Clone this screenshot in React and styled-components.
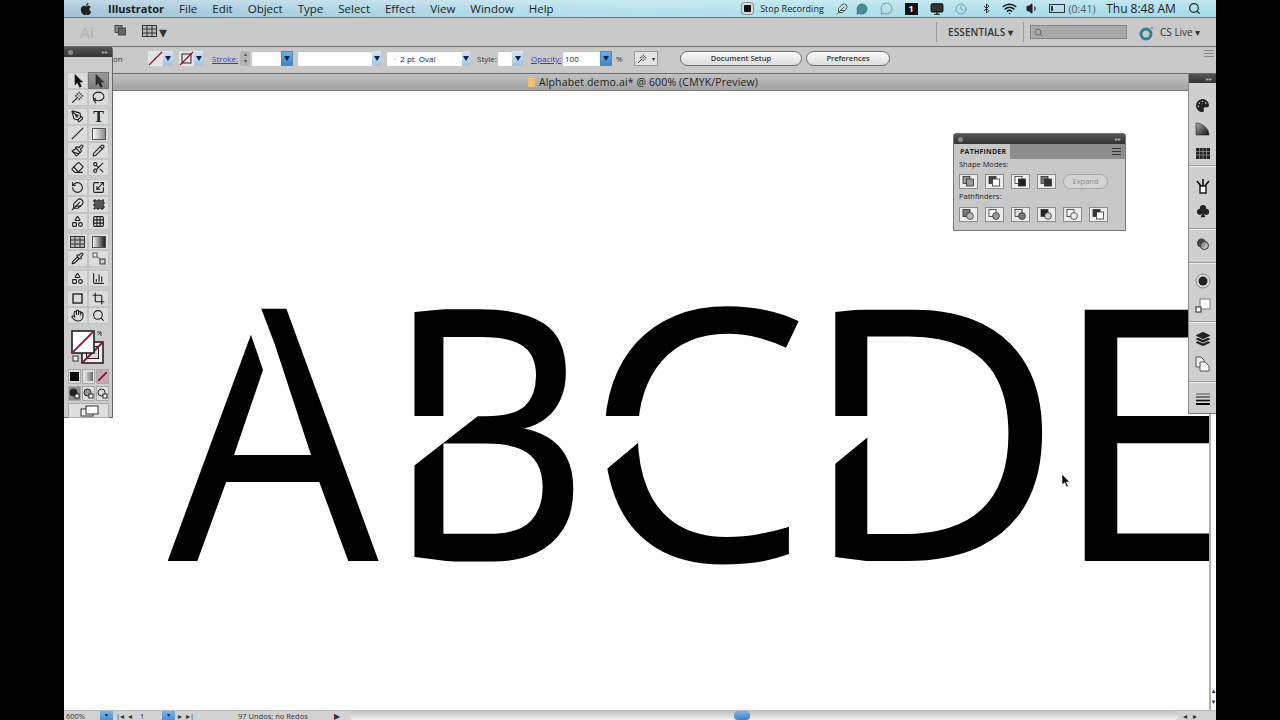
import styled, { createGlobalStyle } from "styled-components";
import {
  Bluetooth, ChartColumn, Clock, Crop, Eraser, Feather, Grid3x3, Hand, Lasso, MessageCircle, Monitor,
  Paintbrush, PenTool, Pencil, Pipette, RotateCcw, Scaling, Scissors, Search, Shapes, Slash, Volume1, Wand, Wifi,
} from "lucide-react";
import { FaApple, FaLayerGroup, FaPalette } from "react-icons/fa";
import { BsSuitClubFill } from "react-icons/bs";

const UI_FONT = `"Open Sans", "Liberation Sans", sans-serif`;

const GlobalStyle = createGlobalStyle`
  html, body { margin: 0; height: 100%; background: #000; overflow: hidden; }
  #root { height: 100%; }
  * { box-sizing: border-box; }
`;

const Screen = styled.div`
  position: relative;
  width: 1152px;
  height: 720px;
  margin-left: 64px;
  display: flex;
  flex-direction: column;
  overflow: hidden;
  font-family: ${UI_FONT};
  color: #1c1c1c;
`;

/* ---- mac menu bar ---- */
const MenuBar = styled.div`
  height: 18px;
  flex: none;
  display: flex;
  align-items: center;
  padding-left: 15px;
  font-size: 11.5px;
  border-bottom: 1px solid #68757c;
  background:
    linear-gradient(180deg, rgba(255, 255, 255, 0.3), rgba(255, 255, 255, 0) 70%),
    linear-gradient(90deg, #a6c6da, #b4e2ec 50%, #a7dde9);
`;
const AppleSlot = styled.span`
  display: flex;
  width: 29px;
  font-size: 14px;
  color: #222;
`;
const MenuItem = styled.span`
  margin-right: 15px;
  font-size: ${(p) => (p.$bold ? 11 : 11.5)}px;
  font-weight: ${(p) => (p.$bold ? 700 : 400)};
  white-space: nowrap;
`;
const Extras = styled.div`
  position: absolute;
  left: 676px;
  top: 0;
  height: 17px;
  display: flex;
  align-items: center;
`;
const ExtraSlot = styled.span`
  width: ${(p) => p.$w ?? 24}px;
  margin-left: ${(p) => p.$ml ?? 0}px;
  display: flex;
  justify-content: center;
  align-items: center;
  flex: none;
  font-size: ${(p) => p.$fs ?? 9}px;
  white-space: nowrap;
  color: ${(p) => p.$color ?? "#1c1c1c"};
`;
const StopDot = styled.span`
  width: 11px;
  height: 11px;
  border-radius: 3px;
  border: 2px solid #d9dde2;
  background: #111;
  box-shadow: 0 0 0 1px #8a8f96;
`;
const Battery = styled.span`
  width: 16px;
  height: 9px;
  border: 1px solid #333;
  position: relative;
  &::before {
    content: "";
    position: absolute;
    left: 1px;
    top: 1px;
    bottom: 1px;
    width: 2px;
    background: #333;
  }
`;
const IconTile = styled.span`
  width: 13px;
  height: 12px;
  background: #111;
  color: #eee;
  font-size: 9px;
  font-weight: 700;
  line-height: 12px;
  text-align: center;
`;

/* ---- application bar ---- */
const AppBar = styled.div`
  height: 29px;
  flex: none;
  position: relative;
  display: flex;
  align-items: center;
  background: #c9c9c9;
  border-bottom: 1px solid #6f6f6f;
`;
const AiMark = styled.span`
  margin-left: 16px;
  width: 18px;
  font-size: 15px;
  font-weight: 600;
  color: #b5b5b5;
`;
const Divider = styled.span`
  width: 1px;
  height: 20px;
  background: #9a9a9a;
  margin-left: ${(p) => p.$ml}px;
  flex: none;
`;
const Essentials = styled.span`
  margin-left: 11px;
  width: 75px;
  font-size: 10px;
  font-weight: 600;
  letter-spacing: 0.1px;
  color: #333;
`;
const SearchBox = styled.span`
  margin-left: 6px;
  width: 97px;
  height: 14px;
  background: #a9a9a9;
  border: 1px solid #858585;
  display: flex;
  align-items: center;
  padding-left: 3px;
  color: #555;
`;
const CsLive = styled.span`
  margin-left: 5px;
  font-size: 10px;
  color: #333;
  white-space: nowrap;
`;

/* ---- control bar ---- */
const ControlBar = styled.div`
  height: 27px;
  flex: none;
  display: flex;
  align-items: center;
  padding: 0 0 3px 49px;
  background: #c9c9c9;
  border-bottom: 1px solid #6a6a6a;
  font-size: 8px;
`;
const Caption = styled.span`
  width: ${(p) => p.$w}px;
  margin-left: ${(p) => p.$ml ?? 0}px;
  flex: none;
  white-space: nowrap;
  color: #333;
`;
const LinkCaption = styled(Caption)`
  color: #3a3ac0;
  text-decoration: underline;
`;
const Combo = styled.span`
  margin-left: ${(p) => p.$ml ?? 0}px;
  display: flex;
  flex: none;
  height: 15px;
`;
const Field = styled.span`
  width: ${(p) => p.$w}px;
  background: #fff;
  display: flex;
  align-items: center;
  padding-left: ${(p) => p.$pl ?? 2}px;
  font-size: 8px;
  white-space: nowrap;
  box-shadow: inset 0 1px 1px #bbb;
`;
const Drop = styled.span`
  width: ${(p) => p.$w ?? 10}px;
  background: ${(p) => (p.$strong ? "linear-gradient(#6fb0e6, #3d85c9)" : "linear-gradient(#d5e6f4, #9cc4e4)")};
  border: ${(p) => (p.$strong ? "1px solid #4d8cb4" : "none")};
  display: flex;
  align-items: center;
  justify-content: center;
  &::after {
    content: "";
    border-left: 3px solid transparent;
    border-right: 3px solid transparent;
    border-top: 5px solid #10204a;
  }
`;
const Spin = styled.span`
  width: 10px;
  height: 15px;
  margin-left: 1px;
  flex: none;
  background: #b4b4b4;
  border-radius: 2px;
  color: #555;
  font-size: 6px;
  line-height: 7px;
  text-align: center;
`;
const Pill = styled.span`
  width: ${(p) => p.$w}px;
  margin-left: ${(p) => p.$ml}px;
  flex: none;
  height: 15px;
  border: 1px solid #6b6b6b;
  border-radius: 8px;
  background: linear-gradient(#fafafa, #dcdcdc);
  font-size: 7.5px;
  font-weight: 600;
  line-height: 13px;
  text-align: center;
  color: #333;
`;
const FlashBox = styled.span`
  width: 24px;
  height: 15px;
  margin-left: 12px;
  flex: none;
  border: 1px solid #999;
  background: #e4e4e4;
  display: flex;
  align-items: center;
  justify-content: space-between;
  padding: 0 2px;
  font-size: 6px;
`;
const PanelMenu = styled.span`
  margin: 0 2px 10px auto;
  width: 10px;
  height: 7px;
  background: repeating-linear-gradient(#8a8a8a 0 1px, transparent 1px 3px);
`;

/* ---- document title ---- */
const DocTab = styled.div`
  height: 17px;
  flex: none;
  display: flex;
  align-items: center;
  justify-content: center;
  gap: 4px;
  padding-left: 6px;
  font-size: 10.5px;
  letter-spacing: 0.15px;
  background: linear-gradient(#c2c2c2, #a2a2a2);
  border-bottom: 1px solid #7d7d7d;
`;
const DocIcon = styled.span`
  width: 7px;
  height: 9px;
  background: #f0c27a;
`;

/* ---- canvas ---- */
const Work = styled.div`
  flex: 1;
  min-height: 0;
  display: flex;
`;
const Canvas = styled.div`
  position: relative;
  flex: 1;
  background: #fff;
  overflow: hidden;
`;
const Letter = styled.span`
  position: absolute;
  left: ${(p) => p.$x}px;
  top: 159px;
  font-family: "Open Sans", sans-serif;
  font-size: 349px;
  line-height: 1;
  color: #000;
  -webkit-text-stroke: ${(p) => p.$stroke ?? 2}px #000;
  transform: scaleX(${(p) => p.$sx ?? 1});
  transform-origin: left top;
`;
const CutOverlay = styled.svg`
  position: absolute;
  left: 0;
  top: 0;
`;
const Pointer = styled.svg`
  position: absolute;
  left: 997px;
  top: 382px;
`;
const VScroll = styled.div`
  width: 7px;
  flex: none;
  background: #fff;
  border-left: 2px solid #b0b0b0;
  display: flex;
  flex-direction: column;
  justify-content: flex-end;
  align-items: center;
  font-size: 6px;
  line-height: 11px;
  color: #333;
  padding-bottom: 2px;
`;

/* ---- status bar ---- */
const StatusBar = styled.div`
  height: 10px;
  flex: none;
  display: flex;
  align-items: center;
  background: #d2d2d2;
  border-top: 1px solid #bbb;
  font-size: 7.5px;
  color: #333;
`;
const StatusText = styled.span`
  width: ${(p) => p.$w}px;
  margin-left: ${(p) => p.$ml ?? 0}px;
  flex: none;
  white-space: nowrap;
`;
const StatusDrop = styled.span`
  width: 13px;
  height: 9px;
  flex: none;
  background: linear-gradient(#78b4e6, #4d8fd0);
  color: #10204a;
  font-size: 6px;
  line-height: 9px;
  text-align: center;
`;
const HTrack = styled.span`
  position: relative;
  width: 828px;
  height: 9px;
  margin-left: 8px;
  flex: none;
  background: linear-gradient(#c0c0c0, #f2f2f2);
  border-radius: 4px;
`;
const HThumb = styled.span`
  position: absolute;
  left: 384px;
  top: 0;
  width: 16px;
  height: 9px;
  border-radius: 4px;
  background: linear-gradient(#7ab4e8, #3f7fc4);
`;

/* ---- floating panels ---- */
const PanelHead = styled.div`
  height: ${(p) => p.$h}px;
  flex: none;
  background: linear-gradient(#555, #333);
  display: flex;
  align-items: center;
  justify-content: space-between;
  padding: 0 4px;
  color: #aaa;
  font-size: 6px;
  line-height: 1;
  &::before {
    content: "";
    width: 5px;
    height: 5px;
    border-radius: 50%;
    background: ${(p) => (p.$noDot ? "transparent" : "#888")};
  }
`;
const ToolPanel = styled.div`
  position: absolute;
  left: 0;
  top: 47px;
  width: 49px;
  height: 371px;
  z-index: 3;
  background: #cbcbcb;
  border-right: 1px solid #666;
  border-bottom: 1px solid #666;
  border-radius: 3px 3px 0 0;
  display: flex;
  flex-direction: column;
  padding-bottom: 2px;
`;
const ToolGrip = styled.div`
  height: 15px;
  flex: none;
`;
const ToolGroup = styled.div`
  display: grid;
  grid-template-columns: 21px 21px;
  grid-auto-rows: 17px;
  justify-content: center;
  margin-bottom: ${(p) => p.$mb ?? 3}px;
`;
const ToolCell = styled.span`
  display: flex;
  align-items: center;
  justify-content: center;
  position: relative;
  background: ${(p) => (p.$active ? "linear-gradient(#9a9a9a, #7e7e7e)" : "#dcdcdc")};
  border: 1px solid ${(p) => (p.$active ? "#777" : "#c4c4c4")};
  color: #1e1e1e;
`;
const SwatchArea = styled.div`
  height: 42px;
  flex: none;
  padding: 2px 0 0 6px;
`;
const ModeRow = styled.div`
  display: flex;
  justify-content: center;
  gap: 1px;
  height: 15px;
  margin-bottom: 2px;
  flex: none;
`;
const ModeCell = styled.span`
  width: ${(p) => p.$w ?? 13}px;
  height: 15px;
  display: flex;
  align-items: center;
  justify-content: center;
  background: ${(p) => p.$bg ?? "#dedede"};
  border: 1px solid #aaa;
`;
const ModeChip = styled.span`
  width: 9px;
  height: 9px;
  background: ${(p) => p.$fill};
`;

const PathPanel = styled.div`
  position: absolute;
  left: 889px;
  top: 133px;
  width: 173px;
  height: 98px;
  z-index: 3;
  background: #c8c8c8;
  border: 1px solid #777;
  border-radius: 3px 3px 0 0;
  display: flex;
  flex-direction: column;
  font-size: 7.5px;
`;
const TabRow = styled.div`
  height: 15px;
  flex: none;
  display: flex;
  background: #8e8e8e;
`;
const PathTab = styled.span`
  width: 56px;
  background: #c8c8c8;
  font-size: 7px;
  font-weight: 700;
  letter-spacing: 0.2px;
  line-height: 15px;
  padding-left: 6px;
`;
const TabMenu = styled.span`
  margin: 4px 4px 0 auto;
  width: 9px;
  height: 7px;
  background: repeating-linear-gradient(#333 0 1px, transparent 1px 3px);
`;
const PathBody = styled.div`
  padding: 0 5px;
  display: flex;
  flex-direction: column;
`;
const PathLabel = styled.div`
  height: 11px;
  line-height: 11px;
  margin-bottom: ${(p) => p.$mb ?? 4}px;
  color: #222;
`;
const PathRow = styled.div`
  display: flex;
  gap: 7px;
  height: 15px;
  margin-bottom: 2px;
`;
const PathBtn = styled.span`
  width: 19px;
  height: 15px;
  background: #ececec;
  border: 1px solid #8b8b8b;
  flex: none;
  display: flex;
  align-items: center;
  justify-content: center;
`;
const ExpandBtn = styled.span`
  width: 45px;
  height: 15px;
  border: 1px solid #a5a5a5;
  border-radius: 8px;
  font-size: 7.5px;
  line-height: 13px;
  text-align: center;
  color: #8f8f8f;
  background: #d4d4d4;
`;

const Dock = styled.div`
  position: absolute;
  left: 1124px;
  top: 74px;
  width: 28px;
  height: 340px;
  z-index: 3;
  background: #cfcfcf;
  border-left: 1px solid #888;
  border-bottom: 1px solid #777;
  display: flex;
  flex-direction: column;
`;
const DockGroup = styled.div`
  height: ${(p) => p.$h}px;
  flex: none;
  padding-top: ${(p) => p.$pt}px;
  border-bottom: 1px solid #9c9c9c;
  box-shadow: 0 1px 0 #eee;
  display: flex;
  flex-direction: column;
  align-items: center;
  &:last-child { border-bottom: 0; box-shadow: none; }
`;
const DockCell = styled.span`
  height: ${(p) => p.$h ?? 24}px;
  flex: none;
  display: flex;
  align-items: center;
  color: #222;
  font-size: 14px;
`;

/* ---- small drawings ---- */
const ArrowIcon = ({ fill = "#111" }) => (
  <svg width="14" height="14" viewBox="0 0 14 14">
    <path d="M4 0.5V11L6.5 8.6 8.6 13.2 10.4 12.4 8.3 8H11.5Z" fill={fill} stroke="#111" strokeWidth="0.6" />
  </svg>
);

const lucide = (Icon) => <Icon size={13} strokeWidth={2} />;

const GradientSquare = ({ dark }) => (
  <svg width="14" height="12" viewBox="0 0 14 12">
    <defs>
      <linearGradient id={dark ? "g-d" : "g-l"}>
        <stop offset="0" stopColor="#fff" />
        <stop offset="1" stopColor={dark ? "#111" : "#888"} />
      </linearGradient>
    </defs>
    <rect x="0.5" y="0.5" width="13" height="11" fill={`url(#${dark ? "g-d" : "g-l"})`} stroke="#555" />
  </svg>
);

const ToolT = styled.span`
  font-family: "Liberation Serif", serif;
  font-size: 16px;
  font-weight: 700;
  line-height: 1;
`;

const FreeTransform = () => (
  <svg width="14" height="13" viewBox="0 0 14 13">
    <rect x="2" y="2" width="10" height="9" fill="#555" stroke="#111" strokeDasharray="2 2" />
  </svg>
);

const MeshSquare = () => (
  <svg width="15" height="12" viewBox="0 0 15 12">
    <rect x="0.5" y="0.5" width="14" height="11" fill="#bbb" stroke="#333" />
    <path d="M5 0V12M10 0V12M0 4H15M0 8H15" stroke="#333" />
  </svg>
);

const BlendDots = () => (
  <svg width="14" height="13" viewBox="0 0 14 13">
    <rect x="1" y="1" width="4" height="4" fill="#eee" stroke="#555" />
    <rect x="8" y="7" width="5" height="5" fill="#ccc" stroke="#333" />
    <path d="M5 5L8 7" stroke="#555" />
  </svg>
);

const ArtboardIcon = () => (
  <svg width="13" height="13" viewBox="0 0 13 13">
    <rect x="2" y="2" width="9" height="9" fill="none" stroke="#222" strokeWidth="1.4" />
  </svg>
);

const toolGroups = [
  [<ArrowIcon />, <ArrowIcon fill="#333" />, lucide(Wand), lucide(Lasso)],
  [lucide(PenTool), <ToolT>T</ToolT>, lucide(Slash), <GradientSquare />, lucide(Paintbrush), lucide(Pencil), lucide(Eraser), lucide(Scissors)],
  [lucide(RotateCcw), lucide(Scaling), lucide(Feather), <FreeTransform />, lucide(Shapes), lucide(Grid3x3)],
  [<MeshSquare />, <GradientSquare dark />, lucide(Pipette), <BlendDots />],
  [lucide(Shapes), lucide(ChartColumn)],
  [<ArtboardIcon />, lucide(Crop), lucide(Hand), lucide(Search)],
];

const Swatches = () => (
  <svg width="36" height="38" viewBox="0 0 36 38">
    <rect x="12" y="13" width="21" height="21" fill="#fbe9ef" stroke="#222" strokeWidth="1.6" />
    <rect x="16.5" y="17.5" width="12" height="12" fill="#d9d9d9" stroke="#222" />
    <path d="M12 34L33 13" stroke="#7c1838" strokeWidth="1.8" />
    <rect x="2" y="2" width="22" height="22" fill="#fff" stroke="#222" strokeWidth="1.6" />
    <path d="M2 24L24 2" stroke="#9c1c40" strokeWidth="1.8" />
    <path d="M27 3h4v4M31 3l-3 3" fill="none" stroke="#444" />
    <rect x="3" y="27" width="5" height="5" fill="#eee" stroke="#333" />
  </svg>
);

const DrawMode = ({ shade }) => (
  <svg width="11" height="11" viewBox="0 0 11 11">
    <circle cx="4.5" cy="4.5" r="3.5" fill={shade} stroke="#222" />
    <rect x="6" y="6" width="4" height="4" fill="#fff" stroke="#222" />
  </svg>
);

const ScreenMode = () => (
  <svg width="26" height="12" viewBox="0 0 26 12">
    <rect x="6" y="4" width="12" height="7" fill="#eee" stroke="#333" />
    <rect x="11" y="1" width="12" height="8" fill="#fff" stroke="#333" />
  </svg>
);

const StrokeMini = () => (
  <svg width="9" height="9" viewBox="0 0 9 9">
    <path d="M0 9L9 0" stroke="#7c1030" strokeWidth="1.6" />
  </svg>
);

// overlapping squares for the pathfinder buttons, the variant says what is dark
const PathGlyph = ({ back = "#fff", front = "#888", round }) => (
  <svg width="13" height="11" viewBox="0 0 13 11">
    <rect x="1" y="0.5" width="7" height="7" fill={back} stroke="#333" strokeWidth="0.8" />
    {round ? (
      <circle cx="8" cy="7" r="3.4" fill={front} stroke="#333" strokeWidth="0.8" />
    ) : (
      <rect x="4.5" y="3" width="7" height="7" fill={front} stroke="#333" strokeWidth="0.8" />
    )}
  </svg>
);

const GradientWedge = () => (
  <svg width="15" height="14" viewBox="0 0 15 14">
    <defs>
      <linearGradient id="wedge" x1="0" y1="0" x2="1" y2="1">
        <stop offset="0" stopColor="#aaa" />
        <stop offset="1" stopColor="#111" />
      </linearGradient>
    </defs>
    <path d="M1 1C8 1 14 7 14 13H1Z" fill="url(#wedge)" stroke="#222" strokeWidth="0.6" />
  </svg>
);

const SwatchGrid = () => (
  <svg width="14" height="11" viewBox="0 0 14 11">
    <rect width="14" height="11" fill="#222" />
    <path d="M3.5 0V11M7 0V11M10.5 0V11M0 3.5H14M0 7H14" stroke="#999" strokeWidth="0.7" />
  </svg>
);

const BrushPot = () => (
  <svg width="14" height="16" viewBox="0 0 14 16">
    <rect x="4" y="8" width="6" height="7" fill="#fff" stroke="#111" strokeWidth="1.4" />
    <path d="M7 8V1M5 8L1 3M9 8L13 3" stroke="#111" strokeWidth="1.6" />
  </svg>
);

const AppearanceDial = () => (
  <svg width="14" height="14" viewBox="0 0 14 14">
    <circle cx="5.5" cy="6" r="4.5" fill="#444" />
    <circle cx="8.5" cy="8.5" r="4" fill="#bbb" fillOpacity="0.7" stroke="#333" />
  </svg>
);

const StrokeDisc = () => (
  <svg width="16" height="16" viewBox="0 0 16 16">
    <circle cx="8" cy="8" r="7" fill="#ddd" stroke="#888" />
    <circle cx="8" cy="8" r="4.5" fill="#222" />
  </svg>
);

const TwoSquares = () => (
  <svg width="16" height="15" viewBox="0 0 16 15">
    <rect x="5" y="1" width="10" height="10" fill="#fff" stroke="#777" />
    <rect x="1" y="9" width="5" height="5" fill="#fff" stroke="#222" />
  </svg>
);

const Pages = () => (
  <svg width="15" height="16" viewBox="0 0 15 16">
    <path d="M1 1H6L9 4V11H1Z" fill="#eee" stroke="#555" />
    <path d="M5 6H10L14 10V15H5Z" fill="#fff" stroke="#555" />
  </svg>
);

const HeavyLines = () => (
  <svg width="14" height="12" viewBox="0 0 14 12">
    <path d="M0 1H14" stroke="#555" />
    <path d="M0 4H14" stroke="#333" strokeWidth="1.2" />
    <path d="M0 7.5H14" stroke="#111" strokeWidth="1.6" />
    <path d="M0 11H14" stroke="#000" strokeWidth="2" />
  </svg>
);

const StrokeChip = ({ crossed }) => (
  <svg width="15" height="15" viewBox="0 0 15 15">
    <rect width="15" height="15" fill="#e4e4e4" />
    {crossed && <rect x="3" y="3" width="9" height="9" fill="none" stroke="#222" />}
    <path d="M1 14L14 1" stroke="#8a1030" strokeWidth="1.2" />
  </svg>
);

const CsLiveRing = () => (
  <svg width="16" height="16" viewBox="0 0 16 16">
    <circle cx="7" cy="9" r="5" fill="none" stroke="#2d7f95" strokeWidth="3" />
    <circle cx="13" cy="3" r="1.3" fill="#7a9aa5" />
  </svg>
);

const menus = ["File", "Edit", "Object", "Type", "Select", "Effect", "View", "Window", "Help"];

const extras = [
  { w: 14, node: <StopDot /> },
  { w: 68, ml: 4, node: "Stop Recording" },
  { ml: 4, node: <Feather size={12} color="#555" /> },
  { ml: -4, node: <MessageCircle size={12} color="#3b7a6a" fill="#4a8b9a" /> },
  { node: <MessageCircle size={13} color="#8aa0a8" /> },
  { ml: 1, node: <IconTile>1</IconTile> },
  { ml: 2, node: <Monitor size={14} color="#111" fill="#333" /> },
  { node: <Clock size={12} color="#7f99a8" /> },
  { ml: 1, node: <Bluetooth size={11} color="#222" /> },
  { ml: -1, node: <Wifi size={15} color="#111" strokeWidth={2.4} /> },
  { ml: -1, node: <Volume1 size={13} color="#222" fill="#222" /> },
  { ml: 1, node: <Battery /> },
  { w: 30, ml: -2, color: "#4a5a66", fs: 10.5, node: "(0:41)" },
  { w: 72, ml: 8, fs: 12, node: "Thu 8:48 AM" },
  { ml: 5, node: <Search size={13} color="#222" strokeWidth={2.2} /> },
];

export default function App() {
  return (
    <>
      <GlobalStyle />
      <Screen>
        <MenuBar>
          <AppleSlot><FaApple /></AppleSlot>
          <MenuItem $bold>Illustrator</MenuItem>
          {menus.map((m) => <MenuItem key={m}>{m}</MenuItem>)}
          <Extras>
            {extras.map((e, i) => (
              <ExtraSlot key={i} $w={e.w} $ml={e.ml} $fs={e.fs} $color={e.color}>{e.node}</ExtraSlot>
            ))}
          </Extras>
        </MenuBar>

        <AppBar>
          <AiMark>Ai</AiMark>
          <Combo $ml={16}><PathGlyph back="#888" front="#666" /></Combo>
          <Combo $ml={15}><MeshSquare /></Combo>
          <Caption $w={8} $ml={2}>▾</Caption>
          <Divider $ml={769} />
          <Essentials>ESSENTIALS ▾</Essentials>
          <Divider $ml={0} />
          <SearchBox><Search size={9} /></SearchBox>
          <Combo $ml={12}><CsLiveRing /></Combo>
          <CsLive>CS Live ▾</CsLive>
        </AppBar>

        <ControlBar>
          <Caption $w={10}>on</Caption>
          <Combo $ml={25}><StrokeChip /><Drop /></Combo>
          <Combo $ml={6}><StrokeChip crossed /><Drop $w={9} /></Combo>
          <LinkCaption $w={27} $ml={9}>Stroke:</LinkCaption>
          <Spin>▴<br />▾</Spin>
          <Combo $ml={2}><Field $w={29} /><Drop $w={12} $strong /></Combo>
          <Combo $ml={5}><Field $w={74} /><Drop $w={9} /></Combo>
          <Combo $ml={6}><Field $w={75} $pl={7}>·&nbsp;&nbsp;2 pt. Oval</Field><Drop $w={8} /></Combo>
          <Caption $w={19} $ml={7}>Style:</Caption>
          <Combo $ml={2}><Field $w={14} /><Drop $w={11} /></Combo>
          <LinkCaption $w={28} $ml={8}>Opacity:</LinkCaption>
          <Combo $ml={4}><Field $w={37}>100</Field><Drop $w={12} $strong /></Combo>
          <Caption $w={6} $ml={4}>%</Caption>
          <FlashBox><Wand size={10} /><span>▾</span></FlashBox>
          <Pill $w={122} $ml={22}>Document Setup</Pill>
          <Pill $w={84} $ml={4}>Preferences</Pill>
          <PanelMenu />
        </ControlBar>

        <DocTab><DocIcon />Alphabet demo.ai* @ 600% (CMYK/Preview)</DocTab>

        <Work>
          <Canvas>
            <Letter $x={105} $sx={0.945}>A</Letter>
            <Letter $x={321} $sx={0.905} $stroke={3}>B</Letter>
            <Letter $x={520} $sx={1.02}>C</Letter>
            <Letter $x={737} $sx={1.035}>D</Letter>
            <Letter $x={986} $sx={1.05}>E</Letter>
            {/* white cuts through the letters, coordinates are the canvas' own */}
            <CutOverlay width="1145" height="619" viewBox="0 0 1145 619">
              <g fill="#fff">
                <polygon points="176,209 184,235 199,279 170,364 247,364 211,254 197,217 197,205 170,205" />
                <polygon points="346,325 384,325 384,314 414,314 414,325 351,374 346,378" />
                <polygon points="346,209 411,209 411,215 351,221 346,221" />
                <polygon points="346,473 406,473 351,466 346,466" />
                <polygon points="536,325 580,325 580,351 574,352 538,382" />
                <polygon points="766,325 804,325 804,346 771,373 766,377" />
                <polygon points="766,209 831,209 831,215 771,221 766,221" />
                <polygon points="766,473 826,473 771,466 766,466" />
              </g>
            </CutOverlay>
            <Pointer width="10" height="15" viewBox="0 0 10 15">
              <path d="M1 1V12L3.6 9.6 5.6 14 7.4 13.2 5.4 9H8.6Z" fill="#000" stroke="#fff" strokeWidth="0.7" />
            </Pointer>
          </Canvas>
          <VScroll>▲<br />▼</VScroll>
        </Work>

        <StatusBar>
          <StatusText $w={34} $ml={2}>600%</StatusText>
          <StatusDrop>▾</StatusDrop>
          <StatusText $w={24} $ml={3}>|◂ &nbsp;◂</StatusText>
          <StatusText $w={22}>1</StatusText>
          <StatusDrop>▾</StatusDrop>
          <StatusText $w={24} $ml={3}>▸ &nbsp;▸|</StatusText>
          <StatusText $w={95} $ml={36}>97 Undos; no Redos</StatusText>
          <StatusText $w={8} $ml={1}>▶</StatusText>
          <HTrack><HThumb /></HTrack>
          <StatusText $w={30} $ml={3}>&nbsp;◂ &nbsp;&nbsp;▸</StatusText>
        </StatusBar>

        <ToolPanel>
          <PanelHead $h={10}><span>▸▸</span></PanelHead>
          <ToolGrip />
          {toolGroups.map((group, g) => (
            <ToolGroup key={g} $mb={g === 0 ? 2 : 3}>
              {group.map((icon, i) => (
                <ToolCell key={i} $active={g === 0 && i === 1}>{icon}</ToolCell>
              ))}
            </ToolGroup>
          ))}
          <SwatchArea><Swatches /></SwatchArea>
          <ModeRow>
            <ModeCell><ModeChip $fill="#000" /></ModeCell>
            <ModeCell><ModeChip $fill="linear-gradient(90deg, #eee, #666)" /></ModeCell>
            <ModeCell $bg="#c9a6b0"><StrokeMini /></ModeCell>
          </ModeRow>
          <ModeRow>
            <ModeCell $bg="#8d8d8d"><DrawMode shade="#222" /></ModeCell>
            <ModeCell><DrawMode shade="#999" /></ModeCell>
            <ModeCell><DrawMode shade="#ddd" /></ModeCell>
          </ModeRow>
          <ModeRow><ModeCell $w={41}><ScreenMode /></ModeCell></ModeRow>
        </ToolPanel>

        <PathPanel>
          <PanelHead $h={10}><span>▸▸</span></PanelHead>
          <TabRow>
            <PathTab>PATHFINDER</PathTab>
            <TabMenu />
          </TabRow>
          <PathBody>
            <PathLabel>Shape Modes:</PathLabel>
            <PathRow>
              <PathBtn><PathGlyph back="#999" front="#999" /></PathBtn>
              <PathBtn><PathGlyph back="#444" front="#fff" /></PathBtn>
              <PathBtn><PathGlyph back="#fff" front="#222" /></PathBtn>
              <PathBtn><PathGlyph back="#777" front="#333" /></PathBtn>
              <ExpandBtn>Expand</ExpandBtn>
            </PathRow>
            <PathLabel $mb={5}>Pathfinders:</PathLabel>
            <PathRow>
              <PathBtn><PathGlyph back="#777" front="#bbb" round /></PathBtn>
              <PathBtn><PathGlyph front="#999" round /></PathBtn>
              <PathBtn><PathGlyph back="#ddd" front="#777" round /></PathBtn>
              <PathBtn><PathGlyph back="#222" front="#ccc" round /></PathBtn>
              <PathBtn><PathGlyph front="#eee" round /></PathBtn>
              <PathBtn><PathGlyph back="#333" front="#fff" /></PathBtn>
            </PathRow>
          </PathBody>
        </PathPanel>

        <Dock>
          <PanelHead $h={9} $noDot><span>▸▸</span></PanelHead>
          <DockGroup $h={83} $pt={10}>
            <DockCell><FaPalette size={13} /></DockCell>
            <DockCell><GradientWedge /></DockCell>
            <DockCell><SwatchGrid /></DockCell>
          </DockGroup>
          <DockGroup $h={63} $pt={7}>
            <DockCell $h={25}><BrushPot /></DockCell>
            <DockCell $h={25}><BsSuitClubFill /></DockCell>
          </DockGroup>
          <DockGroup $h={34} $pt={3}>
            <DockCell><AppearanceDial /></DockCell>
          </DockGroup>
          <DockGroup $h={59} $pt={6}>
            <DockCell><StrokeDisc /></DockCell>
            <DockCell><TwoSquares /></DockCell>
          </DockGroup>
          <DockGroup $h={60} $pt={5}>
            <DockCell><FaLayerGroup /></DockCell>
            <DockCell $h={26}><Pages /></DockCell>
          </DockGroup>
          <DockGroup $h={30} $pt={5}>
            <DockCell><HeavyLines /></DockCell>
          </DockGroup>
        </Dock>
      </Screen>
    </>
  );
}
